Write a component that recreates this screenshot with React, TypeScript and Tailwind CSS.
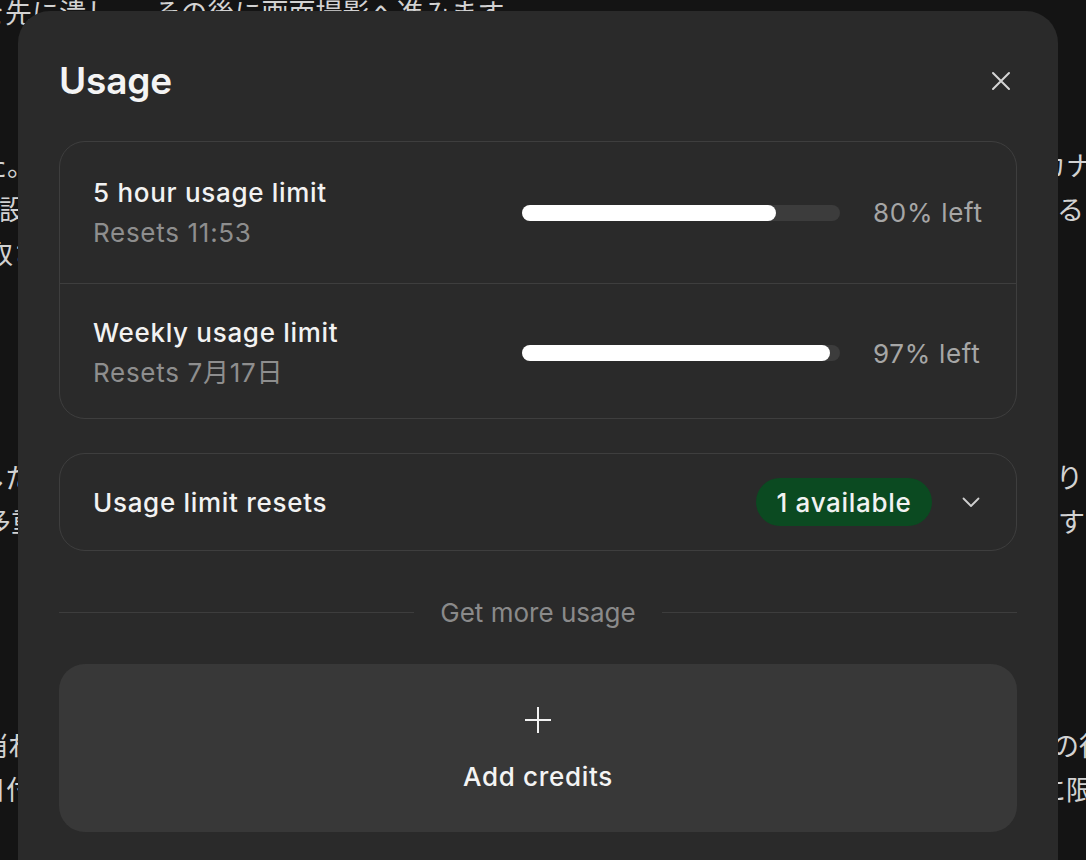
import React from "react";

type BackdropLine = {
  mt: string;
  lx: string;
  left: string;
  rx: string;
  right: string;
};

// Chat transcript peeking out behind the dialog
const backdropLines: BackdropLine[] = [
  { mt: "", lx: "-ml-[22px]", left: "を先に潰し、　その後に画面撮影へ進みます。", rx: "", right: "" },
  { mt: "mt-[109px]", lx: "-ml-[20px]", left: "た。この変更で表示は正しくなります。", rx: "-ml-[19px]", right: "カナ" },
  { mt: "", lx: "-ml-[1px]", left: "設定画面の文言も合わせて修正しています。", rx: "-ml-[1px]", right: "る" },
  { mt: "", lx: "-ml-[14px]", left: "取さえておきます。", rx: "", right: "" },
  { mt: "mt-[180px]", lx: "-ml-[22px]", left: "したため、確認を続けます。", rx: "-ml-[2px]", right: "り" },
  { mt: "", lx: "-ml-[16px]", left: "多重送信は発生していません。", rx: "-ml-[27px]", right: "ます" },
  { mt: "mt-[180px]", lx: "-ml-[19px]", left: "消れた項目は元に戻しました。", rx: "-ml-[6px]", right: "の役" },
  { mt: "", lx: "-ml-[21px]", left: "日付の表示形式を統一しました。", rx: "-ml-[19px]", right: "に限" },
];

const limits = [
  { title: "5 hour usage limit", resets: "Resets 11:53", left: 80 },
  { title: "Weekly usage limit", resets: "Resets 7月17日", left: 97 },
];

const CloseIcon = () => (
  <svg width="24" height="24" viewBox="0 0 24 24" fill="none" stroke="#d4d4d4" strokeWidth="2" strokeLinecap="round">
    <path d="M4 4L20 20M20 4L4 20" />
  </svg>
);

const ChevronIcon = () => (
  <svg width="24" height="24" viewBox="0 0 24 24" fill="none" stroke="#cfcfcf" strokeWidth="1.8" strokeLinecap="round" strokeLinejoin="round">
    <path d="M4.5 8.5L12 16L19.5 8.5" />
  </svg>
);

const PlusIcon = () => (
  <svg width="28" height="28" viewBox="0 0 28 28" fill="none" stroke="#f2f2f2" strokeWidth="2">
    <path d="M14 1V27M1 14H27" />
  </svg>
);

const UsageBar = ({ percent }: { percent: number }) => (
  <div className="h-[16px] w-[318px] rounded-full bg-[#3c3c3c]">
    <div className="h-full rounded-full bg-white" style={{ width: `${percent}%` }} />
  </div>
);

const App = () => {
  return (
    <div className="relative h-[860px] w-full overflow-hidden bg-[#141414] font-['Inter','Noto_Sans_CJK_JP',sans-serif]">
      <div className="-mt-[10px] flex flex-col text-[27px] text-[#d2d2d2] font-['Noto_Sans_CJK_JP',sans-serif]">
        {backdropLines.map((line, idx) => (
          <div key={idx} className={`flex h-[44px] items-center whitespace-nowrap ${line.mt}`}>
            <div className="w-[1058px] shrink-0 overflow-hidden">
              <span className={`block ${line.lx}`}>{line.left}</span>
            </div>
            <div className="min-w-0 flex-1">
              <span className={`block ${line.rx}`}>{line.right}</span>
            </div>
          </div>
        ))}
      </div>

      <div className="absolute left-[18px] top-[11px] w-[1040px] rounded-[32px] bg-[#2a2a2a] px-[41px] pb-[60px] pt-[50px] tracking-[0.7px]">
        <div className="flex h-[40px] items-center justify-between">
          <h2 className="text-[37px] font-semibold tracking-[-0.2px] text-[#f4f4f4]">Usage</h2>
          <button type="button" className="mr-[4px]">
            <CloseIcon />
          </button>
        </div>

        <div className="mt-[40px] rounded-[26px] border border-[#3e3e3e]">
          {limits.map((item, idx) => (
            <div
              key={item.title}
              className={`flex items-center justify-between px-[33px] ${
                idx === 0 ? "h-[141px]" : "h-[135px] border-t border-[#3e3e3e] pt-[4px]"
              }`}
            >
              <div className="flex flex-col">
                <span className="text-[26px] font-medium leading-[40px] text-[#f2f2f2]">{item.title}</span>
                <span className="text-[26px] leading-[40px] text-[#8e8e8e]">{item.resets}</span>
              </div>
              <div className="flex items-center gap-[33px]">
                <UsageBar percent={item.left} />
                <span className="w-[110px] whitespace-nowrap text-[26px] text-[#a6a6a6]">{item.left}% left</span>
              </div>
            </div>
          ))}
        </div>

        <div className="mt-[34px] flex h-[98px] items-center justify-between rounded-[26px] border border-[#3e3e3e] px-[33px]">
          <span className="text-[26px] font-medium text-[#f2f2f2]">Usage limit resets</span>
          <div className="flex items-center gap-[27px]">
            <span className="flex h-[48px] w-[176px] items-center justify-center rounded-full bg-[#0b4a21] text-[26px] font-medium text-[#f2f2f2]">
              1 available
            </span>
            <ChevronIcon />
          </div>
        </div>

        <div className="mt-[46px] flex h-[30px] items-center gap-[26px]">
          <div className="h-px flex-1 bg-[#3d3d3d]" />
          <span className="text-[26px] tracking-normal text-[#8a8a8a]">Get more usage</span>
          <div className="h-px flex-1 bg-[#3d3d3d]" />
        </div>

        <button
          type="button"
          className="mt-[37px] flex h-[168px] w-full flex-col items-center rounded-[26px] bg-[#383838] pt-[42px]"
        >
          <PlusIcon />
          <span className="mt-[28px] text-[26px] font-medium leading-[30px] text-[#f4f4f4]">Add credits</span>
        </button>
      </div>
    </div>
  );
};

export default App;
